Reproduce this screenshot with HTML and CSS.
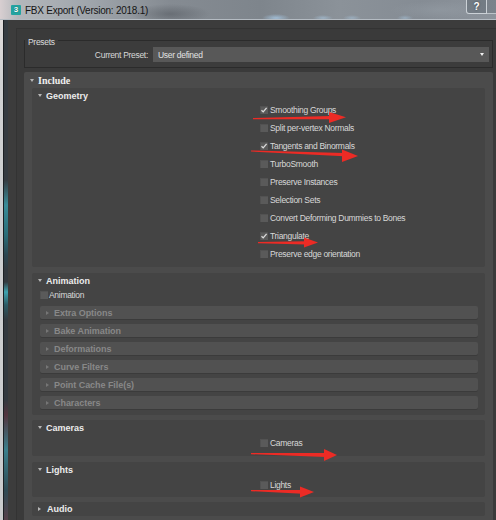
FILE: index.html
```html
<!DOCTYPE html>
<html>
<head>
<meta charset="utf-8">
<link rel="stylesheet" href="styles.css">
</head>
<body>
<div class="win">
  <div class="titlebar">
    <div class="appicon">3</div>
    <div class="title">FBX Export (Version: 2018.1)</div>
    <div class="tb-btns"><div class="tb-help">?</div><div class="tb-close"></div></div>
  </div>
  <div class="main">
    <div class="frame"><div class="f1"></div><div class="f2"></div><div class="f3"></div></div>
    <div class="content">
      <div class="client">
        <fieldset class="presets">
          <legend>Presets</legend>
          <div class="preset-row">
            <span class="plabel">Current Preset:</span>
            <div class="dropdown"><span>User defined</span><span class="dd-arrow"></span></div>
          </div>
        </fieldset>

        <div class="include">
          <div class="rh rh-top"><span class="tri-d"></span><span class="serif">Include</span></div>

          <div class="sub geometry">
            <div class="rh"><span class="tri-d"></span><span>Geometry</span></div>
            <div class="checks">
              <div class="row"><span class="cb"><svg viewBox="0 0 8 8"><path d="M1.5 4.2 3.2 5.9 6.6 1.8"/></svg></span><span>Smoothing Groups</span></div>
              <div class="row"><span class="cb"></span><span>Split per-vertex Normals</span></div>
              <div class="row"><span class="cb"><svg viewBox="0 0 8 8"><path d="M1.5 4.2 3.2 5.9 6.6 1.8"/></svg></span><span>Tangents and Binormals</span></div>
              <div class="row"><span class="cb"></span><span>TurboSmooth</span></div>
              <div class="row"><span class="cb"></span><span>Preserve Instances</span></div>
              <div class="row"><span class="cb"></span><span>Selection Sets</span></div>
              <div class="row"><span class="cb"></span><span>Convert Deforming Dummies to Bones</span></div>
              <div class="row"><span class="cb"><svg viewBox="0 0 8 8"><path d="M1.5 4.2 3.2 5.9 6.6 1.8"/></svg></span><span>Triangulate</span></div>
              <div class="row"><span class="cb"></span><span>Preserve edge orientation</span></div>
            </div>
          </div>

          <div class="sub animation">
            <div class="rh"><span class="tri-d"></span><span>Animation</span></div>
            <div class="anim-row"><span class="cb"></span><span>Animation</span></div>
            <div class="minis">
              <div class="mini"><span class="tri-r"></span><span>Extra Options</span></div>
              <div class="mini"><span class="tri-r"></span><span>Bake Animation</span></div>
              <div class="mini"><span class="tri-r"></span><span>Deformations</span></div>
              <div class="mini"><span class="tri-r"></span><span>Curve Filters</span></div>
              <div class="mini"><span class="tri-r"></span><span>Point Cache File(s)</span></div>
              <div class="mini"><span class="tri-r"></span><span>Characters</span></div>
            </div>
          </div>

          <div class="sub cameras">
            <div class="rh"><span class="tri-d"></span><span>Cameras</span></div>
            <div class="row single"><span class="cb"></span><span>Cameras</span></div>
          </div>

          <div class="sub lights">
            <div class="rh"><span class="tri-d"></span><span>Lights</span></div>
            <div class="row single"><span class="cb"></span><span>Lights</span></div>
          </div>

          <div class="sub audio">
            <div class="rh"><span class="tri-r light"></span><span>Audio</span></div>
          </div>
        </div>
      </div>
    </div>
  </div>

  <svg class="annot" viewBox="0 0 496 520" width="496" height="520">
    <g fill="#ec2b25">
      <polygon points="253,118 331,116 331,119.2 253,119.2"/>
      <polygon points="329,112 346,117.3 329,123"/>
      <polygon points="251,150.4 344,153 344,156.2 251,151.6"/>
      <polygon points="342,149.5 358,156 342,162"/>
      <polygon points="258,242 306,241.3 306,244.4 258,243.2"/>
      <polygon points="304,237.6 318,242.6 304,247.4"/>
      <polygon points="251,453 326,453 326,457 251,454.2"/>
      <polygon points="324,449 337,455 324,461"/>
      <polygon points="251,490 302,490 302,493.8 251,491.2"/>
      <polygon points="300,486.6 314,492 300,497.4"/>
    </g>
  </svg>
</div>
</body>
</html>
```

FILE: styles.css
```css
* { box-sizing: border-box; }

html, body {
  margin: 0;
  padding: 0;
  background: #3c3c3c;
}

body {
  font-family: "Liberation Sans", Arial, sans-serif;
  font-size: 8.5px;
  letter-spacing: -0.3px;
  color: #d6d6d6;
}

.win {
  position: relative;
  width: 496px;
  height: 520px;
  overflow: hidden;
}

/* ---------- title bar ---------- */
.titlebar {
  height: 20px;
  display: flex;
  align-items: flex-start;
  border-bottom: 1px solid #b4bbc2;
  background:
    radial-gradient(ellipse 14px 4px at 276px 18px, rgba(170,205,235,0.75), rgba(170,205,235,0)),
    radial-gradient(ellipse 10px 3px at 323px 18px, rgba(170,200,225,0.6), rgba(170,200,225,0)),
    radial-gradient(ellipse 9px 3px at 352px 18px, rgba(170,200,225,0.5), rgba(170,200,225,0)),
    radial-gradient(ellipse 8px 3px at 405px 18px, rgba(170,200,225,0.5), rgba(170,200,225,0)),
    radial-gradient(ellipse 40px 10px at 170px 14px, rgba(70,75,82,0.45), rgba(70,75,82,0)),
    radial-gradient(ellipse 50px 9px at 440px 10px, rgba(150,158,166,0.5), rgba(150,158,166,0)),
    linear-gradient(90deg, #d8cfd1 0, #b3b7bb 18px, #9fa5ab 90px, #858b92 170px, #7e858c 260px, #8b9299 340px, #858c94 420px, #8c939b 496px);
}

.appicon {
  margin: 5px 0 0 11px;
  width: 10px;
  height: 10px;
  background: #24a3a0;
  border-radius: 1px;
  color: #f4ffff;
  font-weight: bold;
  font-size: 8px;
  line-height: 10px;
  text-align: center;
  letter-spacing: 0;
  text-shadow: 0 0 1px #0d4a48;
}

.title {
  margin: 1px 0 0 4px;
  font-size: 10px;
  line-height: 20px;
  letter-spacing: -0.25px;
  color: #151515;
}

.tb-btns {
  margin-left: auto;
  display: flex;
  margin-right: 0;
}

.tb-help {
  width: 21px;
  height: 14px;
  border: 1px solid rgba(232,238,242,0.75);
  border-top: none;
  border-radius: 0 0 0 3px;
  background: rgba(72,82,92,0.35);
  color: #fff;
  font-weight: bold;
  font-size: 10px;
  line-height: 13px;
  text-align: center;
  letter-spacing: 0;
  text-shadow: 0 0 2px #303840;
}

.tb-close {
  width: 9px;
  height: 14px;
  border-bottom: 1px solid rgba(232,238,242,0.6);
  background: rgba(72,82,92,0.25);
}

/* ---------- body ---------- */
.main {
  display: flex;
  height: 500px;
}

.frame {
  width: 8px;
  display: flex;
  flex: none;
}
.f1 { width: 3px; background: linear-gradient(180deg, #e0dcdc 0, #cfd1d3 60px, #c9cbcd 100%); }
.f2 { width: 1px; background: #1c2024; }
.f3 {
  width: 4px;
  background: linear-gradient(180deg,
    #353b41 0, #353b41 160px,
    #3a8c98 185px, #2a6d78 215px, #2b4550 235px,
    #33393f 250px, #33393f 262px,
    #3fa3b0 272px, #2c5a64 285px,
    #33393f 300px, #33393f 380px,
    #52343e 395px, #3a7f8c 430px, #2f4a54 470px, #55404a 500px);
}

.content {
  flex: 1;
  background: #3c3c3c;
  padding: 8px 0 0 8px;
}

.client {
  height: 100%;
  background: #3a3a3a;
  border-left: 1px solid #333;
  border-top: 1px solid #333;
  padding: 4px 3px 0 7px;
}

/* ---------- presets ---------- */
.presets {
  margin: 0;
  padding: 0 3px 5px 0;
  border: 1px solid #2b2b2b;
  min-width: 0;
  background: #3c3c3c;
}

.presets legend {
  padding: 4px 3px 0 3px;
  margin: 0;
  line-height: 10px;
  color: #dcdcdc;
}

.preset-row {
  display: flex;
  align-items: center;
  height: 15px;
}

.plabel {
  flex: 1;
  text-align: right;
  padding-right: 5px;
  color: #d8d8d8;
}

.dropdown {
  width: 336px;
  height: 15px;
  background: #585858;
  display: flex;
  align-items: center;
  padding-left: 5px;
  color: #e2e2e2;
}

.dd-arrow {
  margin-left: auto;
  margin-right: 5px;
  width: 0;
  height: 0;
  border-left: 2.5px solid transparent;
  border-right: 2.5px solid transparent;
  border-top: 3px solid #f0f0f0;
}

/* ---------- rollouts ---------- */
.include {
  margin-top: 4px;
  background: #4b4b4b;
  border-radius: 2px;
  padding-bottom: 6px;
}

.rh {
  display: flex;
  align-items: center;
  height: 15px;
  padding-left: 6px;
  font-weight: bold;
  font-size: 9px;
  letter-spacing: 0;
  color: #ececec;
}

.rh-top { height: 16px; }

.serif {
  font-family: "Liberation Serif", "Times New Roman", serif;
  font-size: 10px;
  color: #efefef;
}

.tri-d {
  width: 0;
  height: 0;
  border-left: 2.5px solid transparent;
  border-right: 2.5px solid transparent;
  border-top: 3px solid #b6b6b6;
  margin-right: 4px;
}

.tri-r {
  width: 0;
  height: 0;
  border-top: 2.5px solid transparent;
  border-bottom: 2.5px solid transparent;
  border-left: 3px solid #767676;
  margin-right: 5px;
}
.tri-r.light { border-left-color: #b6b6b6; margin-right: 6px; }

.sub {
  background: #444444;
  border-radius: 2px;
  margin: 0 8px 5px 8px;
}

.geometry { margin-bottom: 6px; padding-bottom: 4px; }
.animation { padding-bottom: 6px; }
.cameras { margin-bottom: 6px; padding-bottom: 6px; }
.lights { padding-bottom: 5px; }
.audio .rh { height: 14px; }

.checks { margin-top: -2px; }

.row {
  display: flex;
  align-items: center;
  height: 18px;
  padding-left: 228px;
  gap: 2px;
  color: #d8d8d8;
}
.row.single { height: 15px; }

.cb {
  width: 8px;
  height: 8px;
  flex: none;
  background: #5a5a5a;
  box-shadow: inset 1px 1px 0 #525252;
  display: flex;
}
.cb svg { width: 8px; height: 8px; }
.cb path {
  fill: none;
  stroke: #dcdcdc;
  stroke-width: 1.3;
}

.anim-row {
  display: flex;
  align-items: center;
  height: 14px;
  padding-left: 8px;
  gap: 1px;
  color: #d8d8d8;
}

.minis {
  margin: 4px 7px 0 8px;
  display: flex;
  flex-direction: column;
  gap: 5px;
}

.mini {
  height: 13px;
  background: #515151;
  border-radius: 2px;
  box-shadow: 0 1px 0 #3b3b3b;
  display: flex;
  align-items: center;
  padding-left: 6px;
  font-weight: bold;
  font-size: 9px;
  letter-spacing: -0.05px;
  color: #888888;
}

/* ---------- annotations ---------- */
.annot {
  position: absolute;
  left: 0;
  top: 0;
  pointer-events: none;
}
```
